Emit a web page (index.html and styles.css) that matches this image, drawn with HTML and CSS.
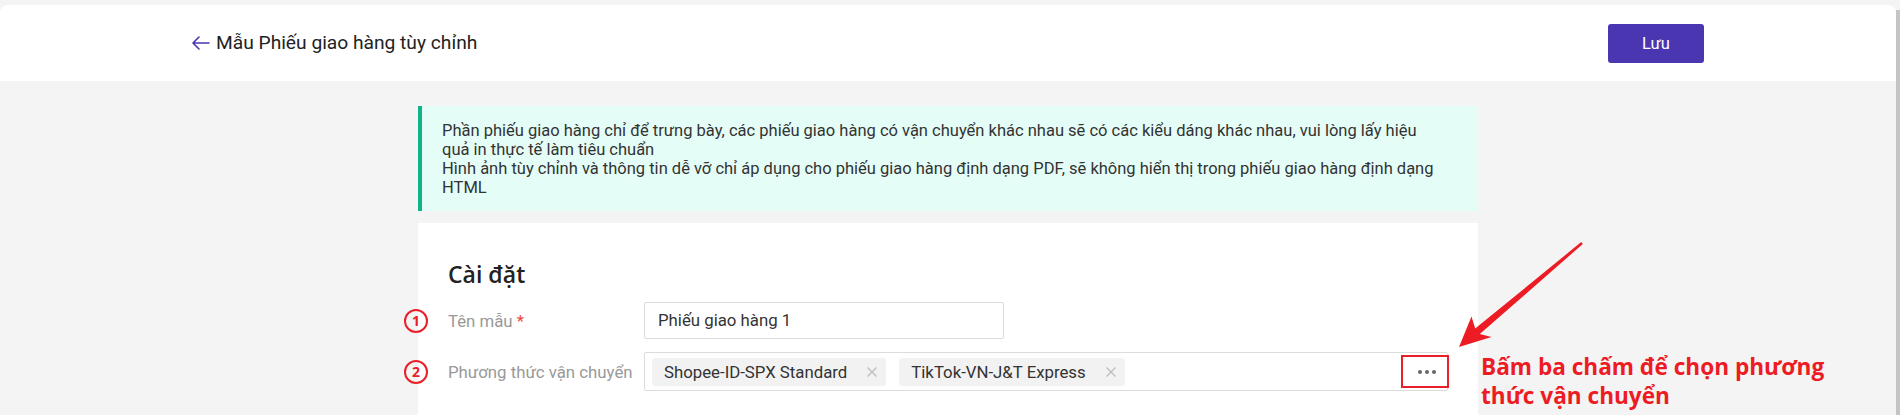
FILE: index.html
```html
<!DOCTYPE html>
<html lang="vi">
<head>
<meta charset="utf-8">
<title>Mẫu Phiếu giao hàng tùy chỉnh</title>
<link rel="stylesheet" href="styles.css">
</head>
<body>
<div class="page">
  <header class="topbar">
    <a class="back" href="#">
      <svg class="back-icon" width="19" height="14" viewBox="0 0 19 14"><path d="M18 7H2M8 1L2 7l6 6" fill="none" stroke="#4a36b0" stroke-width="1.6" stroke-linecap="round" stroke-linejoin="round"/></svg>
      <span class="back-title">Mẫu Phiếu giao hàng tùy chỉnh</span>
    </a>
    <button class="btn-save" type="button">Lưu</button>
  </header>

  <main class="content">
    <div class="notice">
      <p>Phần phiếu giao hàng chỉ để trưng bày, các phiếu giao hàng có vận chuyển khác nhau sẽ có các kiểu dáng khác nhau, vui lòng lấy hiệu quả in thực tế làm tiêu chuẩn</p>
      <p>Hình ảnh tùy chỉnh và thông tin dễ vỡ chỉ áp dụng cho phiếu giao hàng định dạng PDF, sẽ không hiển thị trong phiếu giao hàng định dạng HTML</p>
    </div>

    <section class="card">
      <h2 class="card-title">Cài đặt</h2>

      <div class="row">
        <span class="step">1</span>
        <label class="label">Tên mẫu <em class="req">*</em></label>
        <div class="input">Phiếu giao hàng 1</div>
      </div>

      <div class="row">
        <span class="step">2</span>
        <label class="label">Phương thức vận chuyển</label>
        <div class="tags">
          <span class="chip">Shopee-ID-SPX Standard<svg class="chip-x" width="10" height="10" viewBox="0 0 10 10"><path d="M0.5 0.5l9 9M9.5 0.5l-9 9" stroke="#bdbdbd" stroke-width="1.3"/></svg></span>
          <span class="chip">TikTok-VN-J&amp;T Express<svg class="chip-x" width="10" height="10" viewBox="0 0 10 10"><path d="M0.5 0.5l9 9M9.5 0.5l-9 9" stroke="#bdbdbd" stroke-width="1.3"/></svg></span>
          <span class="more">
            <span class="dot"></span><span class="dot"></span><span class="dot"></span>
            <span class="highlight"></span>
          </span>
        </div>
      </div>
    </section>
  </main>

  <div class="callout">Bấm ba chấm để chọn phương<br>thức vận chuyển</div>
  <svg class="callout-arrow" width="160" height="130" viewBox="0 0 160 130">
    <polygon points="19,117 31.5,86.5 35.2,98.6 141.2,12.1 142.8,14.0 39.8,104.0 51.5,107" fill="#ed1c24"/>
  </svg>
  <div class="scrollbar"></div>
</div>
</body>
</html>
```

FILE: styles.css
```css
* { box-sizing: border-box; }

html, body {
  margin: 0;
  padding: 0;
}

body {
  background: #f4f4f4;
  font-family: Roboto, "Liberation Sans", Arial, sans-serif;
  color: #333;
  height: 415px;
  overflow: hidden;
}

.page {
  position: relative;
  height: 415px;
  padding-right: 4px;
  padding-top: 5px;
}

.topbar {
  height: 76px;
  background: #fff;
  border-radius: 8px 8px 0 0;
  display: flex;
  align-items: center;
  justify-content: space-between;
  padding: 0 192px 0 191px;
}

.back {
  display: flex;
  align-items: center;
  gap: 6px;
  text-decoration: none;
  color: #222;
}

.back-icon { display: block; }

.back-title {
  font-size: 19.2px;
  line-height: 24px;
  color: #222;
}

.btn-save {
  width: 96px;
  height: 39px;
  border: none;
  border-radius: 3px;
  background: #4a36b0;
  color: #fff;
  font-family: Roboto, "Liberation Sans", Arial, sans-serif;
  font-size: 16.5px;
  padding: 0;
}

.content {
  width: 1060px;
  margin: 25px auto 0;
}

.notice {
  background: #e4fdf7;
  border-left: 4px solid #11b38a;
  padding: 15px 36px 14px 20px;
  font-size: 16.5px;
  line-height: 19px;
  color: #333;
}

.notice p { margin: 0; }

.card {
  margin-top: 12px;
  background: #fff;
  padding: 36px 30px 60px;
}

.card-title {
  margin: 0 0 13px;
  font-family: "Open Sans", "Noto Sans", sans-serif;
  font-weight: 600;
  font-size: 23px;
  line-height: 30px;
  color: #222;
}

.row {
  position: relative;
  display: flex;
  align-items: center;
  margin-bottom: 13px;
}

.step {
  position: absolute;
  left: -44px;
  top: 50%;
  margin-top: -12px;
  width: 24px;
  height: 24px;
  border: 2.5px solid #e8202a;
  border-radius: 50%;
  color: #e8202a;
  font-family: "Open Sans", "Noto Sans", sans-serif;
  font-weight: 700;
  font-size: 14px;
  line-height: 19px;
  text-align: center;
}

.label {
  width: 196px;
  flex: none;
  font-size: 16.8px;
  color: #999;
}

.req {
  font-style: normal;
  color: #f0463c;
}

.input {
  width: 360px;
  height: 37px;
  border: 1px solid #dcdcdc;
  border-radius: 2px;
  padding: 0 13px;
  font-size: 16.8px;
  line-height: 35px;
  color: #333;
}

.tags {
  width: 806px;
  height: 39px;
  border: 1px solid #dcdcdc;
  border-radius: 2px;
  display: flex;
  align-items: center;
  gap: 13px;
  padding-left: 7px;
}

.chip {
  display: inline-flex;
  align-items: center;
  height: 28px;
  padding: 0 9px 0 12px;
  background: #f2f2f2;
  border-radius: 3px;
  font-size: 16.8px;
  color: #333;
}

.chip-x {
  margin-left: 20px;
  display: block;
}

.more {
  position: relative;
  margin-left: auto;
  width: 46px;
  height: 33px;
  display: flex;
  align-items: center;
  gap: 3px;
  padding-left: 17px;
}

.dot {
  width: 4px;
  height: 4px;
  border-radius: 50%;
  background: #666;
}

.highlight {
  position: absolute;
  top: 0;
  left: 0;
  right: -2px;
  bottom: 0;
  border: 2px solid #e8202a;
}

.callout {
  position: absolute;
  left: 1481px;
  top: 352px;
  font-family: "Open Sans", "Noto Sans", sans-serif;
  font-weight: 700;
  font-size: 22.6px;
  line-height: 29px;
  color: #ed1c24;
  white-space: nowrap;
}

.callout-arrow {
  position: absolute;
  left: 1440px;
  top: 230px;
}

.scrollbar {
  position: absolute;
  right: 0;
  top: 10px;
  bottom: 0;
  width: 4px;
  background: #c4c4c4;
}
```
